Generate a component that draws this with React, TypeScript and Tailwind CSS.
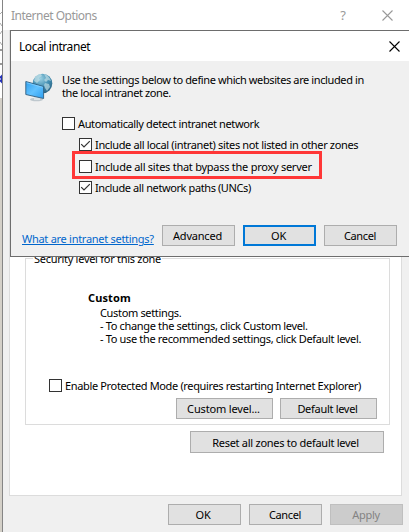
import React from 'react';

function Check({ checked = false }: { checked?: boolean }) {
  return (
    <span className="block h-[13px] w-[13px] shrink-0 border border-[#333] bg-white">
      {checked && (
        <svg viewBox="0 0 11 11" className="block h-[11px] w-[11px]" fill="none" stroke="#333" strokeWidth="1.2">
          <path d="M1.2 5.2 4 8 9.8 2.2" />
        </svg>
      )}
    </span>
  );
}

function Option({ label, checked, className = '' }: { label: string; checked?: boolean; className?: string }) {
  return (
    <div className={'flex h-[13px] items-center gap-[3px] whitespace-nowrap ' + className}>
      <Check checked={checked} />
      <span>{label}</span>
    </div>
  );
}

function Button({ label, className = 'h-[21px] w-[73px] pr-px tracking-[-0.35px] border border-[#adadad] bg-[#e1e1e1]' }: { label: string; className?: string }) {
  return (
    <button className={'flex shrink-0 items-center justify-center whitespace-nowrap ' + className}>{label}</button>
  );
}

function Close({ className }: { className: string }) {
  return (
    <svg viewBox="0 0 11 11" className={'h-[11px] w-[11px] ' + className} stroke="currentColor" strokeWidth="1.1">
      <path d="M.5.5l10 10M10.5.5l-10 10" />
    </svg>
  );
}

function NetworkIcon() {
  return (
    <svg viewBox="0 0 28 29" className="h-[29px] w-[28px] shrink-0">
      <defs>
        <radialGradient id="globe" cx=".4" cy=".25" r=".8">
          <stop offset="0" stopColor="#9bd0e2" />
          <stop offset=".55" stopColor="#418eb2" />
          <stop offset="1" stopColor="#2b607f" />
        </radialGradient>
        <linearGradient id="screen" x1="0" y1="0" x2="1" y2="1">
          <stop offset="0" stopColor="#2fa0ee" />
          <stop offset=".5" stopColor="#62c2ff" />
          <stop offset="1" stopColor="#2a9df0" />
        </linearGradient>
      </defs>
      <circle cx="17.5" cy="10.5" r="9.8" fill="url(#globe)" />
      <path d="M10 4c2-2 4-3 6-3l1 2-3 2 1 2-3 3-3-2zM19 1c4 1 6 4 7 7l-3-1-2 2-2-2 2-2zM20 10l4 1 1 3-3 4-2-3-1-3z" fill="#c6e2e8" opacity=".65" />
      <ellipse cx="11.5" cy="26.5" rx="6.5" ry="1.8" fill="#bfc8ce" />
      <path d="M9 22l6 2v3H9z" fill="#dce3e7" />
      <path d="M.8 8.5 18.6 13.5v12L.8 21.5z" fill="url(#screen)" stroke="#315f80" strokeWidth=".9" />
      <path d="M1.7 9.8 17.8 14.3" stroke="#8dd4ff" strokeWidth=".7" />
    </svg>
  );
}

export default function App() {
  return (
    <div className="relative flex h-[532px] w-[409px] overflow-hidden bg-[#f0f0f0] font-['Noto_Sans','Open_Sans',sans-serif] text-[11px] leading-[13px] text-black">
      <div className="flex w-[3px] shrink-0 flex-col border-r border-[#858585] bg-[#d4d0c8]">
        <div className="h-[98px] bg-white pt-[12px]">
          <svg viewBox="0 0 2 86" className="h-[86px] w-[2px]" fill="none" stroke="#aaa">
            <path d="M0 2l2-2M0 11l2 3M0 22l2-3M0 30l2 3" />
            <path d="M0 38h2M0 52h2" stroke="#333" />
            <path d="M0 66l2-2v6l-2-2" stroke="#2230b8" strokeWidth="2" />
          </svg>
        </div>
      </div>
      <div className="flex min-w-0 flex-1 flex-col">
        <header className="flex h-[30px] shrink-0 items-center bg-white pl-[8px] text-[12px] text-[#999]">
          <span className="flex-1 tracking-[-0.5px]">Internet Options</span>
          <span className="mr-[36px] text-[13px]">?</span>
          <Close className="mr-[16px]" />
        </header>
        <main className="ml-[6px] h-[466px] w-[393px] border border-[#dcdcdc] bg-white pl-[15px] pt-[221px]">
          <fieldset className="h-[173px] w-[365px] border border-[#dcdcdc]">
            <legend className="ml-[7px] px-[1px] tracking-[-0.28px]">Security level for this zone</legend>
            <div className="ml-[62px] mt-[26px] font-bold tracking-[0.1px]">Custom</div>
            <div className="ml-[74px] mt-[2px] whitespace-pre tracking-[-0.34px]">{'Custom settings.\n- To change the settings, click Custom level.\n- To use the recommended settings, click Default level.'}</div>
            <Option label="Enable Protected Mode (requires restarting Internet Explorer)" className="ml-[23px] mt-[34px] tracking-[-0.35px]" />
            <div className="ml-[150px] mt-[6px] flex gap-[7px]">
              <Button label="Custom level..." className="h-[21px] w-[97px] pr-[2px] tracking-[-0.15px] border border-[#adadad] bg-[#e1e1e1]" />
              <Button label="Default level" className="h-[21px] w-[97px] pr-[2px] tracking-[-0.3px] border border-[#adadad] bg-[#e1e1e1]" />
            </div>
          </fieldset>
          <div className="ml-[165px] mt-[6px] flex">
            <Button label="Reset all zones to default level" className="h-[22px] w-[194px] pr-[3px] tracking-[-0.27px] border border-[#adadad] bg-[#e1e1e1]" />
          </div>
        </main>
        <footer className="ml-[165px] mt-[8px] flex gap-[8px]">
          <Button label="OK" className="h-[21px] w-[73px] pr-[3px] tracking-[-0.3px] border border-[#adadad] bg-[#e1e1e1]" />
          <Button label="Cancel" />
          <Button label="Apply" className="h-[21px] w-[73px] pr-px border border-[#bfbfbf] bg-[#ccc] tracking-[-0.3px] text-[#838383]" />
        </footer>
      </div>

      <section className="absolute left-[10px] top-[30px] flex h-[227px] w-[399px] flex-col border-y border-l border-[#6d6d6d] bg-[#f0f0f0]">
        <header className="flex h-[30px] shrink-0 items-center bg-white pl-[8px] text-[12px]">
          <span className="flex-1 tracking-[-0.42px]">Local intranet</span>
          <Close className="mr-[9px]" />
        </header>
        <div className="flex h-[44px] gap-[9px] pl-[14px] pt-[12px]">
          <NetworkIcon />
          <p className="whitespace-pre tracking-[-0.39px]">{'Use the settings below to define which websites are included in\nthe local intranet zone.'}</p>
        </div>
        <Option label="Automatically detect intranet network" className="ml-[51px] mt-[12px] tracking-[-0.38px]" />
        <Option label="Include all local (intranet) sites not listed in other zones" checked className="ml-[68px] mt-[8px] tracking-[-0.35px]" />
        <Option label="Include all sites that bypass the proxy server" className="ml-[68px] mt-[9px] tracking-[-0.26px]" />
        <Option label="Include all network paths (UNCs)" checked className="ml-[68px] mt-[8px] tracking-[-0.4px]" />
        <div className="mt-[31px] flex gap-[8px] pl-[11px]">
          <a className="mt-[7px] w-[132px] whitespace-nowrap tracking-[-0.28px] text-[#0066cc] underline">What are intranet settings?</a>
          <Button label="Advanced" className="h-[21px] w-[73px] pr-[2px] tracking-[-0.2px] border border-[#adadad] bg-[#e1e1e1]" />
          <Button label="OK" className="h-[21px] w-[73px] pr-[2px] tracking-[-0.3px] border-2 border-[#0078d7] bg-[#e1e1e1]" />
          <Button label="Cancel" />
        </div>
      </section>
      <div className="absolute left-[72px] top-[151px] h-[28px] w-[250px] border-[3px] border-[#ff3737]" />
    </div>
  );
}
